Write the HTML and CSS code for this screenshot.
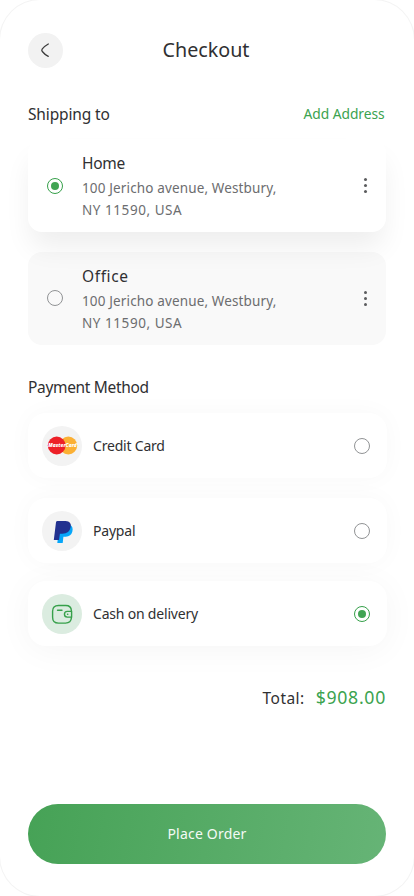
FILE: index.html
```
<!DOCTYPE html>
<html lang="en">
<head>
<meta charset="utf-8">
<meta name="viewport" content="width=device-width, initial-scale=1">
<title>Checkout</title>
<link rel="stylesheet" href="styles.css">
</head>
<body>
<main class="screen">
  <header class="topbar">
    <button class="back" aria-label="Back">
      <svg width="35" height="35" viewBox="0 0 35 35" fill="none" stroke="#3d3d3d" stroke-width="1.3" stroke-linecap="round" stroke-linejoin="round"><path d="M20.3 11Q16.5 13.2 14.3 15.8 13.2 17.1 14.3 18.5 16.5 21.4 20.3 23.3"/></svg>
    </button>
    <h1 class="title">Checkout</h1>
  </header>

  <div class="section-head">
    <h2 class="heading">Shipping to</h2>
    <a class="add">Add Address</a>
  </div>

  <section class="addresses">
    <article class="address selected">
      <span class="radio on"></span>
      <div class="address-text">
        <h3 class="home">Home</h3>
        <p>100 Jericho avenue, Westbury,<br><span class="line2">NY 11590, USA</span></p>
      </div>
      <span class="more"><i></i><i></i><i></i></span>
    </article>
    <article class="address">
      <span class="radio"></span>
      <div class="address-text">
        <h3 class="office">Office</h3>
        <p>100 Jericho avenue, Westbury,<br><span class="line2">NY 11590, USA</span></p>
      </div>
      <span class="more"><i></i><i></i><i></i></span>
    </article>
  </section>

  <h2 class="heading payment">Payment Method</h2>

  <section class="methods">
    <div class="method credit">
      <span class="badge">
        <svg width="40" height="40" viewBox="0 0 40 40"><circle cx="26.3" cy="19.5" r="8.9" fill="#fbb034"/><circle cx="14.7" cy="19.5" r="8.9" fill="#ed2027"/><text x="6.3" y="21.4" textLength="28.4" lengthAdjust="spacingAndGlyphs" class="mc">MasterCard</text></svg>
      </span>
      <span class="label">Credit Card</span>
      <span class="radio"></span>
    </div>
    <div class="method paypal">
      <span class="badge">
        <svg width="40" height="40" viewBox="0 0 40 40"><path fill="#06a6f9" d="M17.5 13.5H28q3.6 2.5 2.3 7.2-1.2 4.6-6.6 5h-2.3L20.7 32h-5.4Z"/><path fill="#22318f" d="M15.5 10h8.2q6 .4 5 6-1.3 6.8-8.3 6.8h-2.5L17 29h-5.2L14 11.2Q14.2 10 15.5 10Z"/></svg>
      </span>
      <span class="label">Paypal</span>
      <span class="radio"></span>
    </div>
    <div class="method cash">
      <span class="badge green">
        <svg width="40" height="40" viewBox="0 0 40 40" fill="none" stroke="#36a04a" stroke-width="1.4" stroke-linecap="round" stroke-linejoin="round"><path d="M29.4 17.4V16.8Q29.2 11.5 23.8 11.5H16.5Q10.6 11.5 10.6 17.3V23.2Q10.6 29.1 16.5 29.1H23.6Q29 29.1 29.4 23.8V23.1"/><path d="M15.5 16.2H20"/><path d="M29.6 17.4H25.3A2.85 2.85 0 0 0 25.3 23.1H29.6Z"/><path d="M25.5 20.2H25.8"/></svg>
      </span>
      <span class="label">Cash on delivery</span>
      <span class="radio on"></span>
    </div>
  </section>

  <div class="total"><span class="total-label">Total:</span><span class="amount">$908.00</span></div>

  <button class="order">Place Order</button>
</main>
</body>
</html>
```

FILE: styles.css
```
* { box-sizing: border-box; }
body {
  margin: 0;
  background: #fff;
  font-family: "Noto Sans", sans-serif;
  font-weight: 400;
  color: #303032;
}
h1, h2, h3, p { margin: 0; font-weight: inherit; }
button { border: 0; padding: 0; font: inherit; }

.screen {
  width: 414px;
  height: 896px;
  padding: 33px 28px 32px;
  overflow: hidden;
  display: flex;
  flex-direction: column;
  background: #fff;
  border-radius: 40px;
  box-shadow: 0 0 0 1px #f4f4f4;
}

.topbar { display: grid; grid-template-columns: 35px 1fr 35px; align-items: center; height: 35px; }
.back { width: 35px; height: 35px; border-radius: 50%; background: #f2f2f2; display: flex; }
.title { text-align: center; font-size: 19.7px; line-height: 34px; height: 35px; margin-left: -2px; }

.section-head { display: flex; justify-content: space-between; align-items: center; height: 24px; margin-top: 34px; }
.heading { font-size: 15.5px; line-height: 24px; letter-spacing: -.15px; white-space: nowrap; }
.add { font-size: 13.8px; line-height: 24px; color: #3ba34f; letter-spacing: -.06px; margin-right: 1.5px; }

.addresses { display: flex; flex-direction: column; gap: 20px; margin-top: 13px; }
.address {
  display: flex;
  height: 93px;
  border-radius: 14px;
  background: #f9f9f9;
  padding: 12px 19px 0 19px;
}
.address.selected {
  position: relative;
  background: #fff;
  box-shadow: 0 18px 28px -3px rgba(0, 0, 0, .07);
}
.address .radio { margin-top: 26px; }
.address.selected .radio { margin-top: 27px; }
.address-text { margin-left: 19px; flex: 1; }
.address-text h3 { font-size: 15.5px; line-height: 24px; }
.address-text .home { letter-spacing: -.3px; }
.address-text .office { letter-spacing: .6px; }
.address-text p { font-size: 13.5px; line-height: 22px; letter-spacing: .14px; margin-top: 2px; color: #6c6d6f; }
.line2 { letter-spacing: .55px; }

.radio {
  flex: none;
  width: 16px;
  height: 16px;
  border: 1px solid #919395;
  border-radius: 50%;
  display: flex;
  align-items: center;
  justify-content: center;
}
.radio.on { border-color: #36a04a; }
.radio.on::after { content: ""; width: 8px; height: 8px; border-radius: 50%; background: #41a453; }

.more { display: flex; flex-direction: column; gap: 3px; margin-top: 27px; }
.more i { width: 3px; height: 3px; border-radius: 50%; background: #5b5c5e; }

.payment { margin-top: 30px; letter-spacing: -.32px; }
.methods { margin-top: 14px; display: flex; flex-direction: column; width: 359px; }
.method {
  display: flex;
  align-items: center;
  height: 65px;
  border-radius: 18px;
  background: #fff;
  padding: 0 17px 0 14px;
  position: relative;
  box-shadow: 0 0 24px rgba(0, 0, 0, .03);
}
.paypal { margin-top: 20px; }
.cash { margin-top: 18px; box-shadow: 0 4px 34px rgba(0, 0, 0, .045); }
.badge { width: 40px; height: 40px; border-radius: 50%; background: #f3f3f3; display: flex; }
.badge.green { background: #dbece0; }
.mc { font: italic 900 5.5px "Noto Sans", sans-serif; fill: #fff; }
.label { flex: 1; margin-left: 11px; font-size: 14px; letter-spacing: -.2px; }

.total { display: flex; justify-content: flex-end; align-items: baseline; gap: 11px; margin-top: 37px; line-height: 28px; }
.total-label { font-size: 15.5px; letter-spacing: .45px; }
.amount { font-size: 17.7px; letter-spacing: .7px; color: #3ba34f; }

.order {
  margin-top: auto;
  height: 60px;
  flex: none;
  border-radius: 30px;
  background: linear-gradient(100deg, #46a256, #66b476);
  color: #f4faf5;
  font-size: 14px;
  letter-spacing: .2px;
  line-height: 59px;
  padding-bottom: 1px;
}
```
